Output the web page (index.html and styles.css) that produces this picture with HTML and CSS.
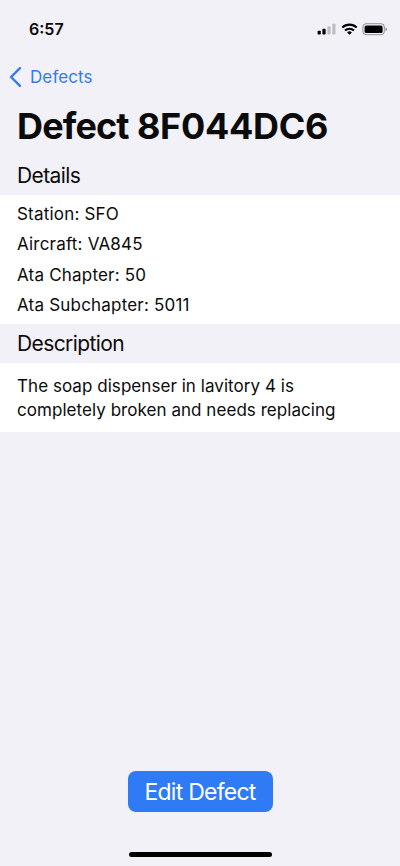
FILE: index.html
```html
<!DOCTYPE html>
<html lang="en">
<head>
<meta charset="utf-8">
<title>Defect 8F044DC6</title>
<link rel="stylesheet" href="styles.css">
</head>
<body>
<div class="screen">
  <header class="status">
    <span class="time">6:57</span>
    <div class="indicators">
      <svg width="20" height="14" viewBox="0 0 20 14"><rect x=".6" y="8.8" width="3.2" height="3.8" rx=".8"/><rect x="5.4" y="6.8" width="3.2" height="5.8" rx=".8"/><rect x="10.4" y="4.3" width="3.2" height="8.3" rx=".8" opacity=".22"/><rect x="15.3" y="1.7" width="3.2" height="10.9" rx=".8" opacity=".22"/></svg>
      <svg class="wifi" width="17" height="14" viewBox="0 0 17 14"><path class="arc" d="M1.3 5.6A10.3 10.3 0 0 1 15.7 5.6M4 8.5A6.5 6.5 0 0 1 13 8.5"/><path d="M6.1 10.4A3.6 3.6 0 0 1 10.9 10.4L8.5 12.8Z"/></svg>
      <svg class="battery" width="26" height="14" viewBox="0 0 26 14"><rect x=".9" y="1.7" width="21.4" height="11" rx="3.2" fill="none" stroke="#000" opacity=".4"/><rect x="2.6" y="3.4" width="18" height="7.6" rx="1.6"/><path d="M23.5 5.5Q25 6 25 7.2T23.5 9Z" opacity=".45"/></svg>
    </div>
  </header>
  <nav class="back">
    <svg width="12" height="20" viewBox="0 0 12 20"><path d="M11 1.2 2 10l9 8.8"/></svg>
    <span>Defects</span>
  </nav>
  <h1><span class="kind">Defect</span> 8F044DC6</h1>
  <h2>Details</h2>
  <ul class="details">
    <li>Station: SFO</li>
    <li>Aircraft: VA845</li>
    <li>Ata Chapter: 50</li>
    <li>Ata Subchapter: 5011</li>
  </ul>
  <h2>Description</h2>
  <p class="description">The soap dispenser in lavitory 4 is<br>completely broken and needs replacing</p>
  <footer>
    <button>Edit Defect</button>
    <div class="home"></div>
  </footer>
</div>
</body>
</html>
```

FILE: styles.css
```css
* { box-sizing: border-box; }
body { margin: 0; background: #f2f1f7; color: #0b0b0c; font-family: Inter, "Liberation Sans", sans-serif; }
.screen { height: 866px; display: flex; flex-direction: column; overflow: hidden; }
.status { height: 58px; padding: 0 12px 0 29px; display: flex; align-items: center; justify-content: space-between; flex: none; }
.time { font-size: 16px; font-weight: 600; }
.indicators { display: flex; align-items: center; gap: 4px; }
.arc { fill: none; stroke: #000; stroke-width: 2.1; }
.back { height: 38px; padding-left: 9px; display: flex; align-items: center; gap: 9px; color: #2f7bf6; font-size: 17px; letter-spacing: .1px; }
.back path { fill: none; stroke: currentColor; stroke-width: 2.4; stroke-linecap: round; stroke-linejoin: round; }
h1 { margin: 0; height: 60px; padding-left: 17px; font-size: 36px; line-height: 61px; font-weight: 700; white-space: nowrap; letter-spacing: -.3px; }
.kind { letter-spacing: -.85px; }
h2 { margin: 0; height: 39px; padding-left: 17px; font-size: 21px; line-height: 40px; font-weight: 400; letter-spacing: -.6px; }
.details { margin: 0; height: 129px; padding: 4px 17px; list-style: none; background: #fff; font-size: 17px; line-height: 30.3px; letter-spacing: .2px; }
.description { margin: 0; height: 69px; padding: 11px 17px; background: #fff; font-size: 17px; line-height: 24px; white-space: nowrap; letter-spacing: .05px; }
footer { margin-top: auto; height: 95px; display: flex; flex-direction: column; align-items: center; justify-content: space-between; padding-bottom: 9px; }
button { width: 145px; height: 41px; border: 0; border-radius: 8px; padding: 0; background: #2f7bf6; color: #fff; font: 400 23px Inter, "Liberation Sans", sans-serif; letter-spacing: -.75px; }
.home { width: 143px; height: 5px; border-radius: 3px; background: #000; }
```
